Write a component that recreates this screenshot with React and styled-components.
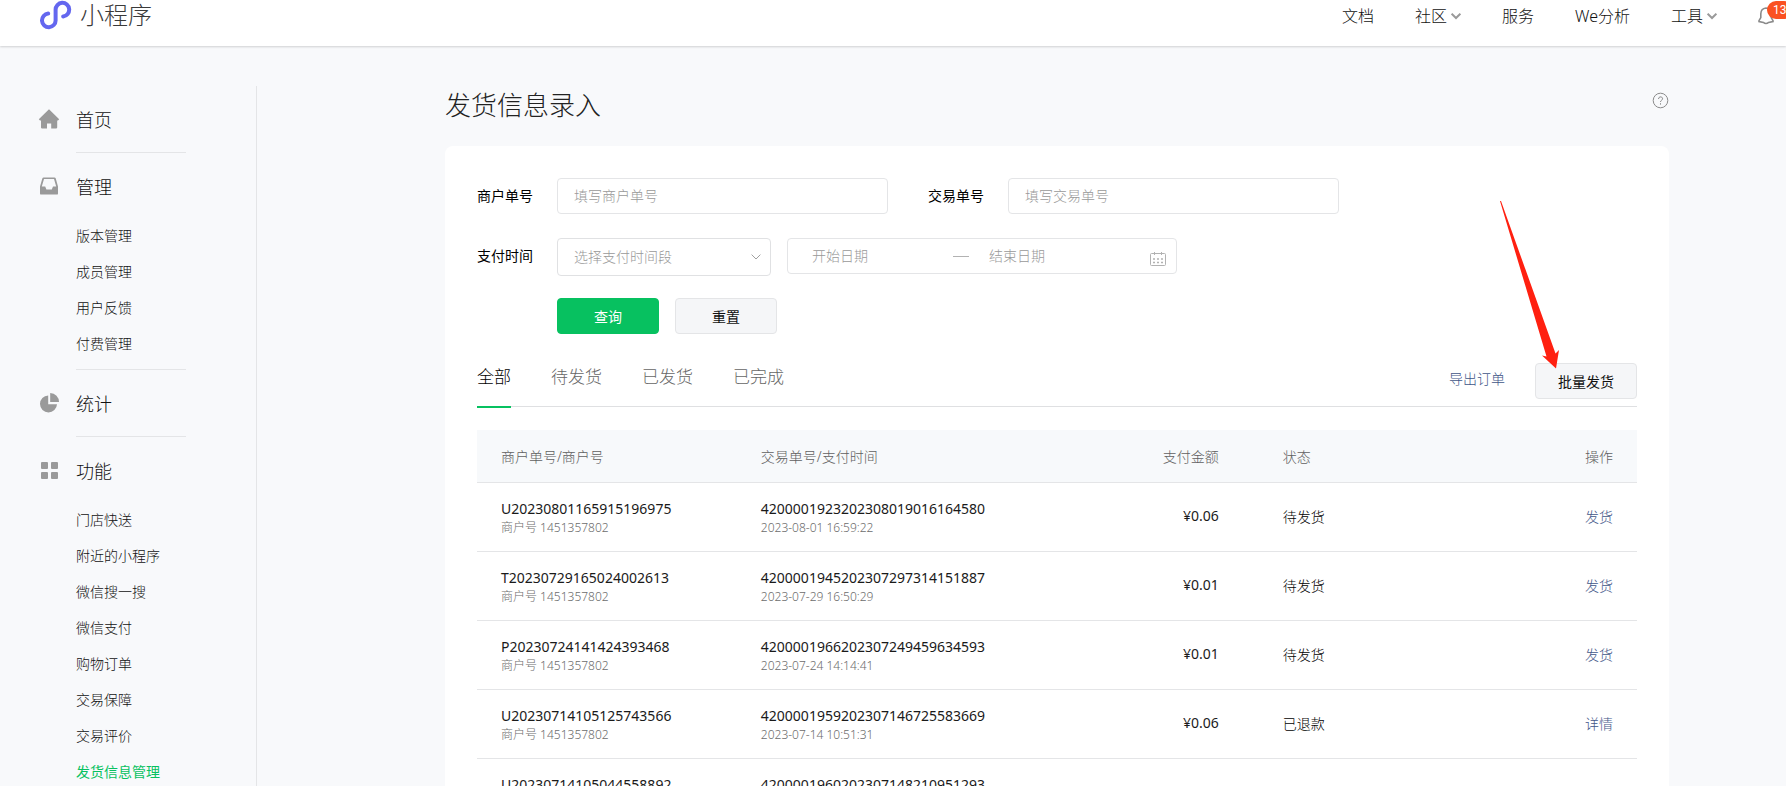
// src/App.jsx
import React, { useState } from "react";
import styled, { createGlobalStyle } from "styled-components";

const GlobalStyle = createGlobalStyle`
  * {
    box-sizing: border-box;
  }

  body {
    margin: 0;
    background-color: #f8f9fb;
    color: #000;
    font-family: "Noto Sans", "Noto Sans CJK SC", sans-serif;
    font-size: 14px;
    font-weight: 300;
  }

  button,
  input,
  select {
    font: inherit;
  }

  a {
    text-decoration: none;
  }
`;

const Page = styled.div`
  display: flex;
  flex-direction: column;
  height: 100vh;
  overflow: hidden;
`;

/* Header */

const TopBar = styled.header`
  display: flex;
  flex-shrink: 0;
  justify-content: space-between;
  height: 46px;
  padding: 0 12px 16px 40px;
  background-color: #fff;
  box-shadow: 0 1px 2px rgba(0, 0, 0, 0.16);
  z-index: 1;
`;

const Brand = styled.a`
  display: flex;
  align-items: center;
  gap: 8px;
  color: #3a3a3a;
  font-size: 24px;
  line-height: 30px;
`;

const TopNav = styled.nav`
  display: flex;
  align-items: center;
  gap: 41px;
  padding-top: 2px;
  font-size: 16px;
`;

const TopLink = styled.a`
  display: flex;
  align-items: center;
  gap: 4px;
  color: #111;
  line-height: 30px;
`;

const BellButton = styled.button`
  position: relative;
  display: flex;
  padding: 0;
  border: none;
  background: none;
  cursor: pointer;
`;

const Badge = styled.span`
  position: absolute;
  top: -6px;
  left: 9px;
  height: 18px;
  padding: 0 6px;
  border-radius: 9px;
  background-color: #fa5121;
  color: #fff;
  font-family: Roboto, sans-serif;
  font-size: 12px;
  font-weight: 400;
  line-height: 18px;
`;

/* Sidebar */

const Body = styled.div`
  display: flex;
  flex: 1;
  min-height: 0;
`;

const Sidebar = styled.aside`
  flex-shrink: 0;
  width: 257px;
  margin-top: 40px;
  padding-left: 38px;
  border-right: 1px solid #e4e5e7;
`;

const Group = styled.section`
  width: 148px;
  padding-bottom: 1px;
`;

const GroupTitle = styled.a`
  display: flex;
  align-items: center;
  gap: 18px;
  height: 65px;
  color: #111;
  font-size: 18px;

  svg {
    width: 20px;
    height: 20px;
    fill: #9a9a9a;
  }
`;

const SubList = styled.ul`
  margin: 0;
  padding: 0 0 6px 38px;
  list-style: none;
`;

const SubLink = styled.a`
  display: block;
  color: ${({ $active }) => ($active ? "#07c160" : "#111")};
  font-weight: ${({ $active }) => ($active ? 400 : 300)};
  line-height: 36px;
  white-space: nowrap;
`;

const Divider = styled.hr`
  width: 110px;
  height: 1px;
  margin: 0 0 0 38px;
  border: none;
  background-color: #e4e5e7;
`;

/* Content */

const Main = styled.main`
  flex: 1;
  min-width: 0;
  padding: 40px 117px 0 188px;
`;

const TitleRow = styled.div`
  display: flex;
  justify-content: space-between;
  align-items: flex-start;
  height: 60px;
`;

const Title = styled.h1`
  margin: 0;
  color: #222;
  font-size: 26px;
  font-weight: 300;
  line-height: 38px;
`;

const HelpButton = styled.button`
  display: flex;
  align-items: center;
  height: 28px;
  padding: 0;
  border: none;
  background: none;
  cursor: pointer;
`;

const Card = styled.section`
  padding: 32px;
  border-radius: 8px;
  background-color: #fff;
`;

const FormRow = styled.div`
  display: flex;
  align-items: flex-start;
  height: 36px;
  margin-bottom: 24px;
`;

const Field = styled.div`
  display: flex;
  margin-right: 40px;
`;

const Label = styled.label`
  width: 80px;
  font-weight: 400;
  line-height: 36px;
`;

const Input = styled.input`
  width: 331px;
  height: 36px;
  padding: 0 16px 2px;
  border: 1px solid #e4e5e7;
  border-radius: 4px;
  background-color: #fff;

  &::placeholder {
    color: #999;
  }
`;

const SelectBox = styled.div`
  display: flex;
  align-items: center;
  width: 214px;
  height: 38px;
  margin-right: 16px;
  padding-right: 9px;
  border: 1px solid #e0e1e3;
  border-radius: 4px;

  svg {
    margin-left: -20px;
    pointer-events: none;
  }
`;

const Select = styled.select`
  flex: 1;
  height: 36px;
  padding: 0 16px 2px;
  border: none;
  background: none;
  color: #999;
  appearance: none;
`;

const DateRange = styled.div`
  display: flex;
  align-items: center;
  width: 390px;
  height: 36px;
  padding: 0 10px 0 24px;
  border: 1px solid #e4e5e7;
  border-radius: 4px;
`;

const DateInput = styled.input`
  width: 141px;
  padding: 0 0 2px;
  border: none;
  background: none;

  &::placeholder {
    color: #999;
  }
`;

const Dash = styled.span`
  width: 16px;
  height: 1px;
  margin-right: 20px;
  background-color: #b2b2b2;
`;

const CalendarButton = styled.button`
  display: flex;
  margin-left: auto;
  padding: 5px 0 0;
  border: none;
  background: none;
  cursor: pointer;
`;

const Button = styled.button`
  width: 102px;
  height: 36px;
  padding: 0;
  border: 1px solid ${({ $primary }) => ($primary ? "#07c160" : "#e4e5e7")};
  border-radius: 4px;
  background-color: ${({ $primary }) => ($primary ? "#07c160" : "#f5f6f8")};
  color: ${({ $primary }) => ($primary ? "#fff" : "#111")};
  font-weight: 400;
  cursor: pointer;
`;

const ButtonGroup = styled.div`
  display: flex;
  gap: 16px;
  padding-left: 80px;
`;

const TabBar = styled.div`
  display: flex;
  justify-content: space-between;
  height: 62px;
  margin: -13px 0 23px;
  border-bottom: 1px solid #dfe0e2;
`;

const Tabs = styled.div`
  display: flex;
  gap: 40px;
`;

const Tab = styled.button`
  height: 63px;
  padding: 0 0 1px;
  border: none;
  border-bottom: 2px solid ${({ $active }) => ($active ? "#07c160" : "transparent")};
  background: none;
  color: ${({ $active }) => ($active ? "#000" : "#666")};
  font-size: 17px;
  cursor: pointer;
`;

const TabActions = styled.div`
  display: flex;
  align-items: center;
  gap: 30px;
  padding-top: 10px;
`;

const ActionLink = styled.a`
  color: #3f5688;
`;

const ExportLink = styled(ActionLink)`
  padding-bottom: 6px;
`;

const Highlighted = styled.div`
  position: relative;
  display: flex;
`;

const Pointer = styled.svg`
  position: absolute;
  top: -163px;
  left: -36px;
  pointer-events: none;
`;

const Table = styled.table`
  width: 100%;
  border-collapse: collapse;
  table-layout: fixed;
`;

const HeadCell = styled.th`
  width: ${({ $width }) => $width};
  height: 52px;
  padding: ${({ $wide }) => ($wide ? "0 40px 0 24px" : "0 24px")};
  border-bottom: 1px solid #e4e5e7;
  background-color: #f7f9fb;
  color: #606060;
  font-weight: 300;
  text-align: ${({ $align }) => $align || "left"};
`;

const Cell = styled.td`
  height: 69px;
  padding: ${({ $wide }) => ($wide ? "0 40px 2px 24px" : "0 24px 2px")};
  border-bottom: 1px solid #e4e5e7;
  text-align: ${({ $align }) => $align || "left"};
`;

const Number = styled.div`
  color: #1a1a1a;
  font-weight: 400;
  line-height: 20px;
`;

const Details = styled.div`
  padding-top: 4px;
`;

const Note = styled.div`
  color: #6c6c6c;
  font-size: 12px;
  line-height: 18px;
`;

const menu = [
  { title: "首页", icon: "home" },
  {
    title: "管理",
    icon: "inbox",
    items: ["版本管理", "成员管理", "用户反馈", "付费管理"],
  },
  { title: "统计", icon: "pie" },
  {
    title: "功能",
    icon: "grid",
    items: [
      "门店快送",
      "附近的小程序",
      "微信搜一搜",
      "微信支付",
      "购物订单",
      "交易保障",
      "交易评价",
      "发货信息管理",
    ],
  },
];

const topLinks = [
  { text: "文档" },
  { text: "社区", more: true },
  { text: "服务" },
  { text: "We分析" },
  { text: "工具", more: true },
];

const tabs = ["全部", "待发货", "已发货", "已完成"];

const orders = [
  {
    id: "U20230801165915196975",
    trade: "4200001923202308019016164580",
    time: "2023-08-01 16:59:22",
    amount: "¥0.06",
    status: "待发货",
    action: "发货",
  },
  {
    id: "T20230729165024002613",
    trade: "4200001945202307297314151887",
    time: "2023-07-29 16:50:29",
    amount: "¥0.01",
    status: "待发货",
    action: "发货",
  },
  {
    id: "P20230724141424393468",
    trade: "4200001966202307249459634593",
    time: "2023-07-24 14:14:41",
    amount: "¥0.01",
    status: "待发货",
    action: "发货",
  },
  {
    id: "U20230714105125743566",
    trade: "4200001959202307146725583669",
    time: "2023-07-14 10:51:31",
    amount: "¥0.06",
    status: "已退款",
    action: "详情",
  },
  {
    id: "U20230714105044558892",
    trade: "4200001960202307148210951293",
    time: "2023-07-14 10:50:50",
    amount: "¥0.06",
    status: "已退款",
    action: "详情",
  },
];

const icons = {
  home: (
    <path d="M11 0.2 21.2 10.2 20 11.4H19.2V18.6Q19.2 19.4 18.4 19.4H13.2V14.6H9V19.4H3.8Q3 19.4 3 18.6V11.4H2L0.8 10.2Z" />
  ),
  inbox: (
    <path
      fillRule="evenodd"
      d="M5.6 1.4H16.4Q17.4 1.4 17.7 2.3L20 10.6V17.4Q20 18.6 18.8 18.6H3.2Q2 18.6 2 17.4V10.6L4.4 2.3Q4.7 1.4 5.6 1.4ZM6 3 3.8 10.4H7.2L8.4 13.4H13.8L15 10.4H18.2L16 3Z"
    />
  ),
  pie: (
    <>
      <path d="M10.2 2.4V11.2H19A8.5 8.5 0 1 1 10.2 2.4Z" />
      <path d="M12.2 0A8.8 8.8 0 0 1 21 9H12.2Z" />
    </>
  ),
  grid: (
    <>
      <rect x="3" y="2" width="7" height="7" rx="1" />
      <rect x="13" y="2" width="7" height="7" rx="1" />
      <rect x="3" y="12" width="7" height="7" rx="1" />
      <rect x="13" y="12" width="7" height="7" rx="1" />
    </>
  ),
};

const Chevron = ({ color = "#9a9a9a", width = 2 }) => (
  <svg width="10" height="8" viewBox="0 0 10 8" fill="none" stroke={color} strokeWidth={width}>
    <path d="M0.6 1.6 5 6 9.4 1.6" />
  </svg>
);

const Logo = () => (
  <svg width="32" height="30" viewBox="0 0 32 30" fill="none">
    <path
      d="M8.2 13.6A6.8 6.8 0 1 0 15.6 20.2V9.8A6.8 6.8 0 1 1 23.2 16.4"
      stroke="#6467ef"
      strokeWidth="4"
      strokeLinecap="round"
    />
  </svg>
);

const Bell = () => (
  <svg width="16" height="18" viewBox="0 0 16 18" fill="none" stroke="#8a8a8a" strokeWidth="1.6">
    <path d="M8 1C4.4 1.4 2.8 4 2.8 7V10.6L1 13.6V14.6L5.4 15.4Q8 17.6 10.6 15.4L15 14.6V13.6L13.2 10.6V7C13.2 4 11.6 1.4 8 1Z" />
  </svg>
);

const Calendar = () => (
  <svg width="16" height="14" viewBox="0 0 16 14" fill="none" stroke="#b2b2b2">
    <rect x="0.5" y="1.5" width="15" height="12" rx="1" />
    <path d="M4.5 0V3M11.5 0V3" />
    <path d="M3 7H13M3 10.5H13" strokeWidth="1.6" strokeDasharray="2 2" />
  </svg>
);

const Help = () => (
  <svg width="17" height="17" viewBox="0 0 17 17" fill="none" stroke="#8a8a8a">
    <circle cx="8.5" cy="8.5" r="7.3" />
    <path d="M6.5 7C6.5 4.2 10.6 4.2 10.6 6.8 10.6 8.2 8.5 8.2 8.5 10M8.5 11.2V12.6" />
  </svg>
);

const Header = () => (
  <TopBar>
    <Brand href="#">
      <Logo />
      小程序
    </Brand>
    <TopNav>
      {topLinks.map(({ text, more }) => (
        <TopLink href="#" key={text}>
          {text}
          {more && <Chevron />}
        </TopLink>
      ))}
      <BellButton aria-label="通知">
        <Bell />
        <Badge>13</Badge>
      </BellButton>
    </TopNav>
  </TopBar>
);

const SideMenu = () => (
  <Sidebar>
    {menu.map(({ title, icon, items }, index) => (
      <React.Fragment key={title}>
        {index > 0 && <Divider />}
        <Group>
          <GroupTitle href="#">
            <svg viewBox="0 0 20 20" overflow="visible">
              {icons[icon]}
            </svg>
            {title}
          </GroupTitle>
          {items && (
            <SubList>
              {items.map((item) => (
                <li key={item}>
                  <SubLink href="#" $active={item === "发货信息管理"}>
                    {item}
                  </SubLink>
                </li>
              ))}
            </SubList>
          )}
        </Group>
      </React.Fragment>
    ))}
  </Sidebar>
);

const SearchForm = () => (
  <form onSubmit={(e) => e.preventDefault()}>
    <FormRow>
      <Field>
        <Label htmlFor="merchant">商户单号</Label>
        <Input id="merchant" placeholder="填写商户单号" />
      </Field>
      <Field>
        <Label htmlFor="trade">交易单号</Label>
        <Input id="trade" placeholder="填写交易单号" />
      </Field>
    </FormRow>
    <FormRow>
      <Label htmlFor="period">支付时间</Label>
      <SelectBox>
        <Select id="period" defaultValue="">
          <option value="">选择支付时间段</option>
        </Select>
        <Chevron color="#a0a0a0" width={1} />
      </SelectBox>
      <DateRange>
        <DateInput placeholder="开始日期" aria-label="开始日期" />
        <Dash />
        <DateInput placeholder="结束日期" aria-label="结束日期" />
        <CalendarButton type="button" aria-label="选择日期">
          <Calendar />
        </CalendarButton>
      </DateRange>
    </FormRow>
    <FormRow>
      <ButtonGroup>
        <Button type="submit" $primary>
          查询
        </Button>
        <Button type="reset">重置</Button>
      </ButtonGroup>
    </FormRow>
  </form>
);

const OrderTable = () => (
  <Table>
    <thead>
      <tr>
        <HeadCell $width="22.4%">商户单号/商户号</HeadCell>
        <HeadCell $width="33%">交易单号/支付时间</HeadCell>
        <HeadCell $width="12%" $align="right" $wide>
          支付金额
        </HeadCell>
        <HeadCell>状态</HeadCell>
        <HeadCell $align="right">操作</HeadCell>
      </tr>
    </thead>
    <tbody>
      {orders.map((order) => (
        <tr key={order.id}>
          <Cell>
            <Details>
              <Number>{order.id}</Number>
              <Note>商户号 1451357802</Note>
            </Details>
          </Cell>
          <Cell>
            <Details>
              <Number>{order.trade}</Number>
              <Note>{order.time}</Note>
            </Details>
          </Cell>
          <Cell $align="right" $wide>
            <Number>{order.amount}</Number>
          </Cell>
          <Cell>{order.status}</Cell>
          <Cell $align="right">
            <ActionLink href="#">{order.action}</ActionLink>
          </Cell>
        </tr>
      ))}
    </tbody>
  </Table>
);

const App = () => {
  const [tab, setTab] = useState("全部");

  return (
    <Page>
      <GlobalStyle />
      <Header />
      <Body>
        <SideMenu />
        <Main>
          <TitleRow>
            <Title>发货信息录入</Title>
            <HelpButton aria-label="帮助">
              <Help />
            </HelpButton>
          </TitleRow>
          <Card>
            <SearchForm />
            <TabBar>
              <Tabs role="tablist">
                {tabs.map((name) => (
                  <Tab
                    key={name}
                    role="tab"
                    aria-selected={name === tab}
                    $active={name === tab}
                    onClick={() => setTab(name)}
                  >
                    {name}
                  </Tab>
                ))}
              </Tabs>
              <TabActions>
                <ExportLink href="#">导出订单</ExportLink>
                <Highlighted>
                  <Button>批量发货</Button>
                  <Pointer width="62" height="170" viewBox="0 0 62 170" fill="#ff2010">
                    <path d="M1 1 2 1 56.5 153.5 60 150 57 168.5 43 155.5 47.5 156.5Z" />
                  </Pointer>
                </Highlighted>
              </TabActions>
            </TabBar>
            <OrderTable />
          </Card>
        </Main>
      </Body>
    </Page>
  );
};

export default App;
